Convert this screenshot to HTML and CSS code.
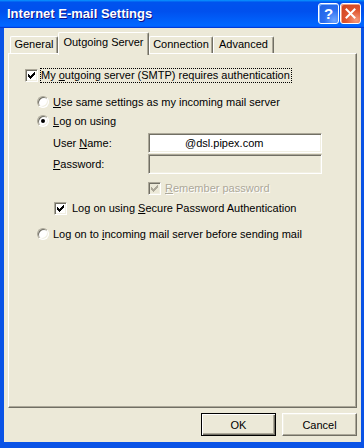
FILE: index.html
```html
<!DOCTYPE html>
<html lang="en">
<head>
    <meta charset="UTF-8" />
    <title>Internet E-mail Settings</title>
    <link rel="stylesheet" href="styles.css">
</head>
<body>

    <div class="window">
        <div class="titlebar">
            <span class="title">Internet E-mail Settings</span>
            <div class="title-buttons">
                <button class="tb-btn tb-help">?</button>
                <button class="tb-btn tb-close">
                    <svg width="11" height="11" viewBox="0 0 11 11"><path d="M1.5 1.5 L9.5 9.5 M9.5 1.5 L1.5 9.5" stroke="#fff" stroke-width="2" stroke-linecap="square" /></svg>
                </button>
            </div>
        </div>

        <div class="client">
            <div class="tabs">
                <div class="tab tab-general">General</div>
                <div class="tab tab-outgoing active">Outgoing Server</div>
                <div class="tab tab-connection">Connection</div>
                <div class="tab tab-advanced">Advanced</div>
            </div>

            <div class="panel">
                <label class="row row-auth">
                    <span class="check">
                        <svg width="7" height="7" viewBox="0 0 7 7" shape-rendering="crispEdges"><path d="M6 0h1v3h-1v1h-1v1h-1v1h-1v1h-1v-1h-1v-1h-1v-3h1v1h1v1h1v-1h1v-1h1z" fill="#000" /></svg>
                    </span>
                    <span class="focus">My <u>o</u>utgoing server (SMTP) requires authentication</span>
                </label>

                <label class="row row-same">
                    <span class="radio"></span>
                    <span><u>U</u>se same settings as my incoming mail server</span>
                </label>

                <label class="row row-logon">
                    <span class="radio checked"></span>
                    <span><u>L</u>og on using</span>
                </label>

                <div class="fields">
                    <span class="field-label">User <u>N</u>ame:</span>
                    <input class="field field-user" type="text" value="@dsl.pipex.com" />
                    <span class="field-label"><u>P</u>assword:</span>
                    <input class="field" type="password" disabled />
                </div>

                <label class="row row-remember disabled">
                    <span class="check">
                        <svg width="7" height="7" viewBox="0 0 7 7" shape-rendering="crispEdges"><path d="M6 0h1v3h-1v1h-1v1h-1v1h-1v1h-1v-1h-1v-1h-1v-3h1v1h1v1h1v-1h1v-1h1z" fill="#aca899" /></svg>
                    </span>
                    <span><u>R</u>emember password</span>
                </label>

                <label class="row row-spa">
                    <span class="check">
                        <svg width="7" height="7" viewBox="0 0 7 7" shape-rendering="crispEdges"><path d="M6 0h1v3h-1v1h-1v1h-1v1h-1v1h-1v-1h-1v-1h-1v-3h1v1h1v1h1v-1h1v-1h1z" fill="#000" /></svg>
                    </span>
                    <span>Log on using <u>S</u>ecure Password Authentication</span>
                </label>

                <label class="row row-before">
                    <span class="radio"></span>
                    <span>Log on to <u>i</u>ncoming mail server before sending mail</span>
                </label>
            </div>

            <div class="actions">
                <button class="btn btn-default">OK</button>
                <button class="btn">Cancel</button>
            </div>
        </div>
    </div>

</body>
</html>
```

FILE: styles.css
```css
:root {
    --face: #ece9d8;
    --light: #f1efe2;
    --shadow: #aca899;
    --dark: #716f64;
    --frame: #0a53e6;
}

* {
    box-sizing: border-box;
    margin: 0;
    padding: 0
}

body {
    width: 364px;
    height: 448px;
    overflow: hidden;
    font-family: 'Liberation Sans', Arial, sans-serif;
    font-size: 11px;
    color: #000;
}

.window {
    width: 364px;
    height: 448px;
    display: flex;
    flex-direction: column;
    background: var(--frame);
}

/* title bar */

.titlebar {
    height: 28px;
    display: flex;
    align-items: flex-start;
    justify-content: space-between;
    padding: 0 3px 0 7px;
    background: linear-gradient(180deg, #0997ff, #0053ee 8%, #0050ee 40%, #06f 88%, #06f 93%, #005bff 95%, #003dd7 96%, #003dd7);
}

.title {
    margin-top: 6px;
    color: #fff;
    font-weight: 700;
    font-size: 13px;
    line-height: 15px;
    text-shadow: 1px 1px #0f1089;
}

.title-buttons {
    display: flex;
    gap: 1px;
    margin-top: 3px;
}

.tb-btn {
    width: 21px;
    height: 21px;
    border: 1px solid #fff;
    border-radius: 3px;
    display: flex;
    align-items: center;
    justify-content: center;
    color: #fff;
    font-family: 'Liberation Sans', Arial, sans-serif;
    font-weight: 700;
    font-size: 15px;
}

.tb-help {
    background: radial-gradient(circle at 80% 85%, #6ea6ff, #2b6ef0 45%, #1f5fe0);
    box-shadow: inset 1px 1px #7fb2ff;
}

.tb-close {
    background: radial-gradient(circle at 80% 85%, #f59a7c, #e0552f 45%, #c9401c);
    box-shadow: inset 1px 1px #f4a285;
}

/* client area */

.client {
    flex: 1;
    margin: 0 3px 6px 4px;
    padding: 4px 4px 6px 4px;
    background: var(--face);
    display: flex;
    flex-direction: column;
}

.tabs {
    display: flex;
    align-items: flex-start;
    height: 23px;
    margin: 0 0 -2px 2px;
}

.tab {
    height: 17px;
    margin-top: 4px;
    line-height: 15px;
    text-align: center;
    background: var(--face);
    border: 1px solid;
    border-color: #fff var(--dark) transparent #fff;
    border-bottom: none;
    border-radius: 2px 2px 0 0;
    box-shadow: inset -1px 0 var(--shadow);
}

.tab-general { width: 48px }
.tab-outgoing { width: 91px }
.tab-connection { width: 64px }
.tab-advanced { width: 61px }

.tab.active {
    position: relative;
    z-index: 1;
    height: 23px;
    margin-top: 0;
    line-height: 18px;
}

.panel {
    flex: 1;
    padding: 13px 0 0 0;
    border: 1px solid;
    border-color: #fff var(--dark) var(--dark) #fff;
    box-shadow: inset -1px -1px var(--shadow);
    display: flex;
    flex-direction: column;
    align-items: flex-start;
}

.row {
    display: flex;
    align-items: center;
    gap: 4px;
    height: 16px;
    line-height: 13px;
}

.row-auth { margin-left: 16px; gap: 2px }
.row-same { margin: 11px 0 0 28px }
.row-logon { margin: 3px 0 0 28px }
.row-remember { margin: 6px 0 0 139px }
.row-spa { margin: 4px 0 0 45px; gap: 5px }
.row-before { margin: 10px 0 0 28px }

.focus {
    border: 1px dotted #000;
    padding: 0 1px 0 0;
}

.check {
    width: 13px;
    height: 13px;
    flex-shrink: 0;
    display: flex;
    align-items: center;
    justify-content: center;
    background: #fff;
    border: 1px solid;
    border-color: var(--shadow) #fff #fff var(--shadow);
    box-shadow: inset 1px 1px var(--dark), inset -1px -1px var(--light);
}

.radio {
    width: 12px;
    height: 12px;
    flex-shrink: 0;
    display: flex;
    align-items: center;
    justify-content: center;
    border-radius: 50%;
    background: #fff;
    border: 1px solid;
    border-color: var(--shadow) #fff #fff var(--shadow);
    box-shadow: inset 1px 1px var(--dark), inset -1px -1px var(--light);
}

    .radio.checked::after {
        content: '';
        width: 4px;
        height: 4px;
        border-radius: 50%;
        background: #000;
    }

.disabled {
    color: var(--shadow);
    text-shadow: 1px 1px #fff;
}

    .disabled .check {
        background: var(--face);
    }

.fields {
    display: grid;
    grid-template-columns: 95px 174px;
    grid-auto-rows: 20px;
    row-gap: 1px;
    align-items: center;
    margin: 4px 0 0 44px;
}

.field {
    height: 20px;
    width: 174px;
    padding: 0 4px 0 36px;
    font-family: inherit;
    font-size: 11px;
    color: #000;
    background: #fff;
    border: 1px solid;
    border-color: var(--shadow) #fff #fff var(--shadow);
    box-shadow: inset 1px 1px var(--dark), inset -1px -1px var(--light);
    outline: none;
}

    .field:disabled {
        background: var(--face);
    }

/* bottom buttons */

.actions {
    display: flex;
    justify-content: flex-end;
    gap: 6px;
    margin-top: 5px;
}

.btn {
    width: 75px;
    height: 23px;
    font-family: inherit;
    font-size: 11px;
    color: #000;
    background: var(--face);
    border: 1px solid;
    border-color: #fff var(--dark) var(--dark) #fff;
    box-shadow: inset -1px -1px var(--shadow), inset 1px 1px var(--light);
}

.btn-default {
    border: 1px solid #000;
    box-shadow: inset 1px 1px #fff, inset -1px -1px var(--dark), inset -2px -2px var(--shadow);
}
```
